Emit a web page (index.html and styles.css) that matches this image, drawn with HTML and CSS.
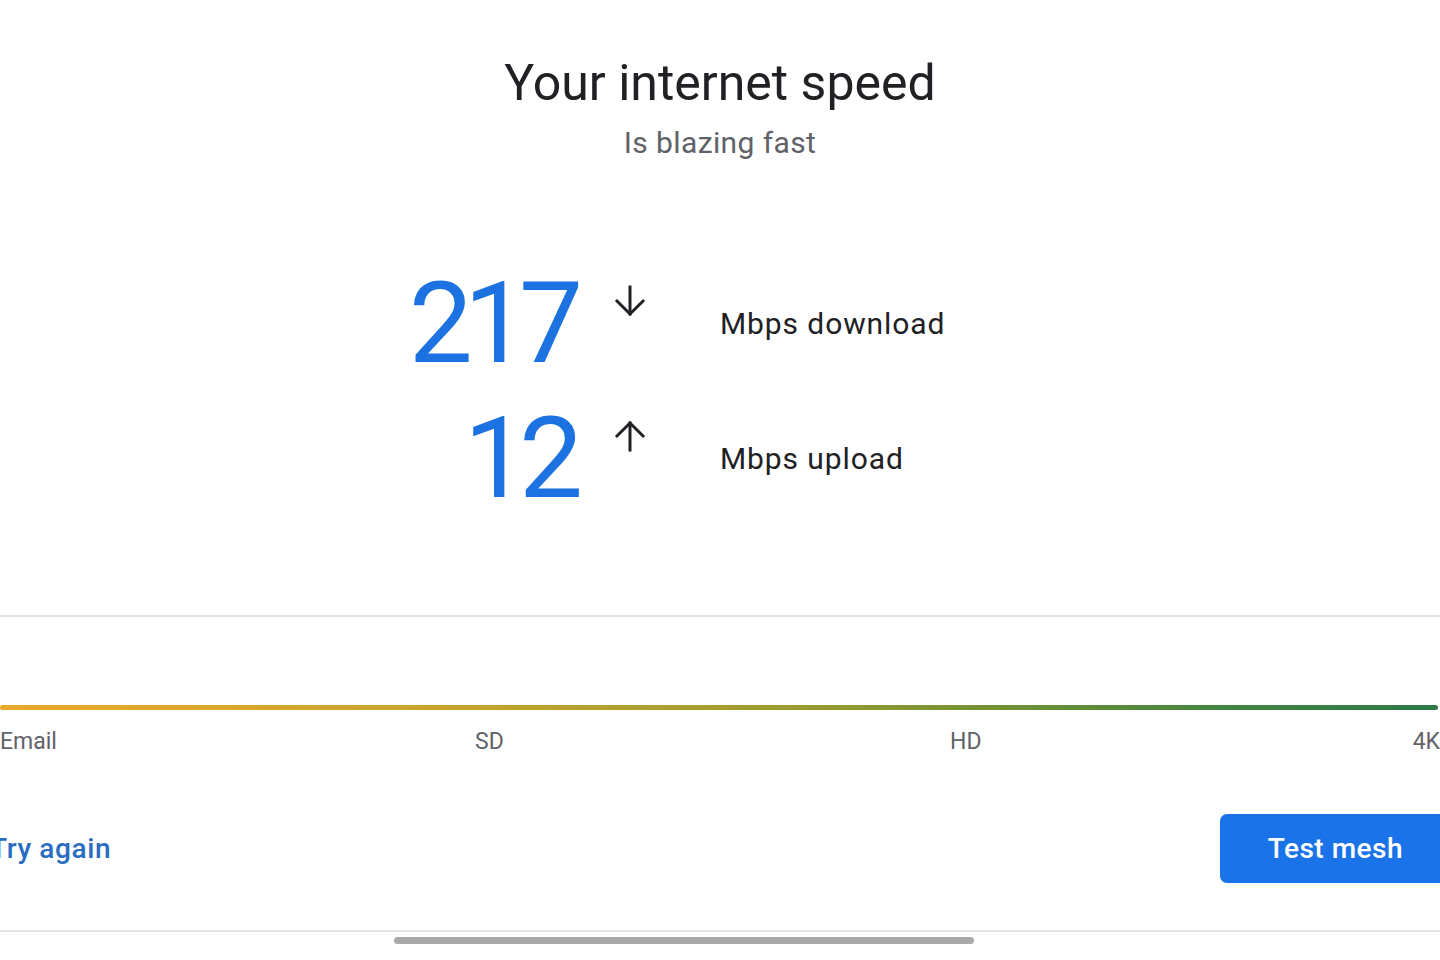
FILE: index.html
```html
<!DOCTYPE html>
<html lang="en">
<head>
<meta charset="utf-8">
<title>Your internet speed</title>
<link rel="stylesheet" href="styles.css">
</head>
<body>
<main class="page">
  <header class="header">
    <h1 class="title">Your internet speed</h1>
    <p class="subtitle">Is blazing fast</p>
  </header>

  <section class="speeds">
    <div class="speed-row">
      <span class="speed-value">217</span>
      <span class="speed-arrow">
        <svg width="34" height="32" viewBox="0 0 34 32" fill="none" stroke="#202124" stroke-width="3" stroke-linecap="square">
          <line x1="17" y1="2" x2="17" y2="29"/>
          <polyline points="4,16 17,29 30,16" stroke-linejoin="miter"/>
        </svg>
      </span>
      <span class="speed-label">Mbps download</span>
    </div>
    <div class="speed-row">
      <span class="speed-value">12</span>
      <span class="speed-arrow">
        <svg width="34" height="32" viewBox="0 0 34 32" fill="none" stroke="#202124" stroke-width="3" stroke-linecap="square">
          <line x1="17" y1="3" x2="17" y2="30"/>
          <polyline points="4,16 17,3 30,16" stroke-linejoin="miter"/>
        </svg>
      </span>
      <span class="speed-label">Mbps upload</span>
    </div>
  </section>

  <hr class="divider">

  <section class="scale">
    <div class="scale-bar"></div>
    <div class="scale-labels">
      <span>Email</span>
      <span>SD</span>
      <span>HD</span>
      <span class="scale-last">4K</span>
    </div>
  </section>

  <div class="actions">
    <button class="link-btn" type="button">Try again</button>
    <button class="primary-btn" type="button">Test mesh</button>
  </div>

  <hr class="divider divider-bottom">
  <div class="home-indicator"></div>
</main>
</body>
</html>
```

FILE: styles.css
```css
* { box-sizing: border-box; }

html, body {
  margin: 0;
  padding: 0;
  background: #ffffff;
}

body {
  width: 1440px;
  height: 960px;
  overflow: hidden;
  font-family: Roboto, "Noto Sans", "Liberation Sans", sans-serif;
  color: #202124;
}

.page {
  display: flex;
  flex-direction: column;
  width: 1440px;
}

.header {
  display: flex;
  flex-direction: column;
  align-items: center;
  padding-top: 53px;
}

.title {
  margin: 0;
  font-size: 50px;
  line-height: 60px;
  font-weight: 400;
  color: #202124;
}

.subtitle {
  margin: 10px 0 0;
  font-size: 30px;
  line-height: 40px;
  letter-spacing: 0.4px;
  color: #5f6368;
}

.speeds {
  margin-top: 91px;
  display: flex;
  flex-direction: column;
}

.speed-row {
  display: grid;
  grid-template-columns: 578px 142px auto;
  align-items: center;
  height: 135px;
}

.speed-value {
  justify-self: end;
  font-size: 114px;
  line-height: 135px;
  color: #1c72e0;
  letter-spacing: -9px;
  margin-right: 4px;
  margin-top: 2px;
}

.speed-arrow {
  align-self: start;
  padding-left: 35px;
  padding-top: 31px;
  display: flex;
}

.speed-label {
  font-size: 30px;
  line-height: 40px;
  letter-spacing: 0.9px;
  color: #202124;
  margin-top: 2px;
}

.divider {
  margin: 91px 0 0;
  border: 0;
  height: 2px;
  background: #e3e3e3;
}

.scale {
  margin-top: 88px;
  display: flex;
  flex-direction: column;
}

.scale-bar {
  height: 5px;
  width: 1438px;
  border-radius: 3px;
  background: linear-gradient(90deg, #eaa92a 0%, #c9a42c 30%, #9b9c30 55%, #6a9036 72%, #3f8440 86%, #2d7a48 100%);
}

.scale-labels {
  margin-top: 17px;
  display: grid;
  grid-template-columns: 475px 475px 1fr auto;
  font-size: 23px;
  line-height: 30px;
  color: #5f6368;
}

.scale-last {
  justify-self: end;
}

.actions {
  margin: 57px -11px 0 -10px;
  display: flex;
  justify-content: space-between;
  align-items: center;
  height: 69px;
}

.link-btn {
  border: 0;
  background: none;
  padding: 0;
  font-family: inherit;
  font-size: 28px;
  font-weight: 500;
  color: #2a6cbf;
  letter-spacing: 0.6px;
}

.primary-btn {
  border: 0;
  height: 69px;
  padding: 0 48px;
  border-radius: 7px;
  background: #1a73e8;
  color: #ffffff;
  font-family: inherit;
  font-size: 28px;
  font-weight: 500;
  letter-spacing: 0.5px;
}

.divider-bottom {
  margin-top: 47px;
}

.home-indicator {
  margin: 5px 0 0 394px;
  width: 580px;
  height: 7px;
  border-radius: 4px;
  background: #a8a8a8;
}
```
